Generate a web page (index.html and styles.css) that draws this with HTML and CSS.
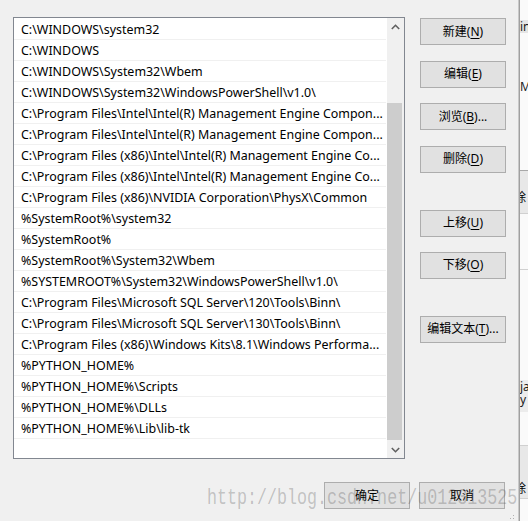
FILE: index.html
```html
<!DOCTYPE html>
<html lang="zh-CN">
<head>
<meta charset="utf-8">
<title>编辑环境变量</title>
<link rel="stylesheet" href="styles.css">
</head>
<body>
<div class="screen">
  <div class="dialog">
    <div class="main">
      <div class="listbox">
        <div class="rows">
          <div class="row">C:\WINDOWS\system32</div>
          <div class="row">C:\WINDOWS</div>
          <div class="row">C:\WINDOWS\System32\Wbem</div>
          <div class="row">C:\WINDOWS\System32\WindowsPowerShell\v1.0\</div>
          <div class="row">C:\Program Files\Intel\Intel(R) Management Engine Compon...</div>
          <div class="row">C:\Program Files\Intel\Intel(R) Management Engine Compon...</div>
          <div class="row">C:\Program Files (x86)\Intel\Intel(R) Management Engine Co...</div>
          <div class="row">C:\Program Files (x86)\Intel\Intel(R) Management Engine Co...</div>
          <div class="row">C:\Program Files (x86)\NVIDIA Corporation\PhysX\Common</div>
          <div class="row">%SystemRoot%\system32</div>
          <div class="row">%SystemRoot%</div>
          <div class="row">%SystemRoot%\System32\Wbem</div>
          <div class="row">%SYSTEMROOT%\System32\WindowsPowerShell\v1.0\</div>
          <div class="row">C:\Program Files\Microsoft SQL Server\120\Tools\Binn\</div>
          <div class="row">C:\Program Files\Microsoft SQL Server\130\Tools\Binn\</div>
          <div class="row">C:\Program Files (x86)\Windows Kits\8.1\Windows Performa...</div>
          <div class="row">%PYTHON_HOME%</div>
          <div class="row">%PYTHON_HOME%\Scripts</div>
          <div class="row">%PYTHON_HOME%\DLLs</div>
          <div class="row">%PYTHON_HOME%\Lib\lib-tk</div>
        </div>
        <div class="scrollbar">
          <div class="sb-btn"><svg width="9" height="6" viewBox="0 0 9 6"><path d="M0.8 5 L4.5 1.3 L8.2 5" fill="none" stroke="#606060" stroke-width="1.6"/></svg></div>
          <div class="sb-track"><div class="sb-thumb"></div></div>
          <div class="sb-btn"><svg width="9" height="6" viewBox="0 0 9 6"><path d="M0.8 1 L4.5 4.7 L8.2 1" fill="none" stroke="#606060" stroke-width="1.6"/></svg></div>
        </div>
      </div>
      <div class="side">
        <div class="group group-first">
          <div class="btn">新建(<u>N</u>)</div>
          <div class="btn">编辑(<u>E</u>)</div>
          <div class="btn">浏览(<u>B</u>)...</div>
          <div class="btn">删除(<u>D</u>)</div>
        </div>
        <div class="group">
          <div class="btn">上移(<u>U</u>)</div>
          <div class="btn">下移(<u>O</u>)</div>
        </div>
        <div class="group">
          <div class="btn">编辑文本(<u>T</u>)...</div>
        </div>
      </div>
    </div>
    <div class="footer">
      <div class="btn">确定</div>
      <div class="btn">取消</div>
    </div>
    <svg class="grip" width="8" height="8" viewBox="0 0 8 8"><rect x="5" y="2" width="1" height="1" fill="#b0b0b0"/><rect x="5" y="5" width="1" height="1" fill="#b0b0b0"/><rect x="2" y="5" width="1" height="1" fill="#b0b0b0"/></svg>
    <div class="watermark">http://blog.csdn.net/u012313525</div>
  </div>
  <div class="behind">
    <div class="bw-gap" style="height:20px"></div>
    <div class="bw-band bw-text">in</div>
    <div class="bw-gap" style="height:47px"></div>
    <div class="bw-text bw-plain">Ms</div>
    <div class="bw-gap" style="height:77px"></div>
    <div class="bw-line"></div>
    <div class="bw-btn"><span class="bw-cjk">除</span></div>
    <div class="bw-line bw-light"></div>
    <div class="bw-gap" style="height:55px"></div>
    <div class="bw-line bw-light"></div>
    <div class="bw-gap" style="height:110px"></div>
    <div class="bw-band2"><div class="bw-text">ja</div><div class="bw-text">y</div></div>
    <div class="bw-gap" style="height:33px"></div>
    <div class="bw-line bw-light"></div>
    <div class="bw-btn bw-btn2"><span class="bw-cjk">除</span></div>
    <div class="bw-line bw-light"></div>
  </div>
</div>
</body>
</html>
```

FILE: styles.css
```css
html, body {
  margin: 0;
  padding: 0;
}
body {
  width: 528px;
  height: 521px;
  overflow: hidden;
  background: #f0f0f0;
  font-family: "Noto Sans", "Noto Sans CJK SC", sans-serif;
  font-size: 12px;
  color: #000;
}
.screen {
  display: flex;
  width: 528px;
  height: 521px;
}
.dialog {
  position: relative;
  width: 519px;
  flex: none;
  box-sizing: border-box;
  padding: 17px 13px 0 13px;
  border-right: 1px solid #c9c9c9;
  background: #f0f0f0;
}
.main {
  display: flex;
  gap: 15px;
}
.listbox {
  width: 392px;
  height: 442px;
  box-sizing: border-box;
  border: 1px solid #828790;
  background: #fff;
  display: flex;
}
.rows {
  width: 373px;
  padding-top: 1px;
  flex: none;
}
.row {
  height: 19px;
  padding-top: 1px;
  line-height: 20px;
  font-size: 12.45px;
  border-bottom: 1px solid #f0f0f0;
  margin-right: 1px;
  padding-left: 7px;
  padding-right: 2px;
  white-space: nowrap;
  overflow: hidden;
}
.scrollbar {
  width: 17px;
  flex: none;
  background: #f0f0f0;
  display: flex;
  flex-direction: column;
}
.sb-btn {
  height: 17px;
  display: flex;
  align-items: center;
  justify-content: center;
}
.sb-track {
  flex: 1;
}
.sb-thumb {
  margin-top: 68px;
  height: 337px;
  width: 15px;
  background: #cdcdcd;
}
.side {
  display: flex;
  flex-direction: column;
  padding-top: 1px;
}
.group {
  display: flex;
  flex-direction: column;
  gap: 15px;
  margin-top: 37px;
}
.group-first {
  gap: 15.667px;
  margin-top: 0;
}
.btn {
  width: 86px;
  height: 27px;
  box-sizing: border-box;
  border: 1px solid #adadad;
  background: #e1e1e1;
  display: flex;
  align-items: center;
  justify-content: center;
  white-space: nowrap;
  line-height: 1;
}
.btn u {
  text-underline-offset: 2px;
}
.footer {
  display: flex;
  justify-content: flex-end;
  gap: 9px;
  margin-top: 23px;
}
.grip {
  position: absolute;
  right: 2px;
  bottom: 0;
}
.watermark {
  position: absolute;
  left: 207px;
  top: 486px;
  font-family: "Liberation Mono", monospace;
  font-size: 22px;
  line-height: 26px;
  color: rgba(80, 80, 80, 0.3);
  transform: scaleX(0.758);
  transform-origin: 0 0;
  white-space: nowrap;
  pointer-events: none;
}
.behind {
  flex: 1;
  border-left: 1px solid #a0a0a0;
  background: #fafafa;
  overflow: hidden;
  display: flex;
  flex-direction: column;
}
.bw-gap {
  flex: none;
}
.bw-text {
  height: 13px;
  line-height: 13px;
  white-space: nowrap;
  color: #1a1a1a;
}
.bw-band {
  background: #e5e5e5;
}
.bw-line {
  height: 1px;
  background: #a8a8a8;
}
.bw-light {
  background: #d0d0d0;
}
.bw-btn {
  height: 42px;
  box-sizing: border-box;
  padding-top: 11px;
  background: #e8e8e8;
  display: flex;
  align-items: center;
}
.bw-btn2 {
  height: 52px;
  padding-top: 0;
  align-items: flex-end;
}
.bw-cjk {
  display: block;
  margin-left: -6px;
  line-height: 18px;
}
.bw-band2 {
  background: #ececec;
  padding: 0 0 6px 0;
}
```
